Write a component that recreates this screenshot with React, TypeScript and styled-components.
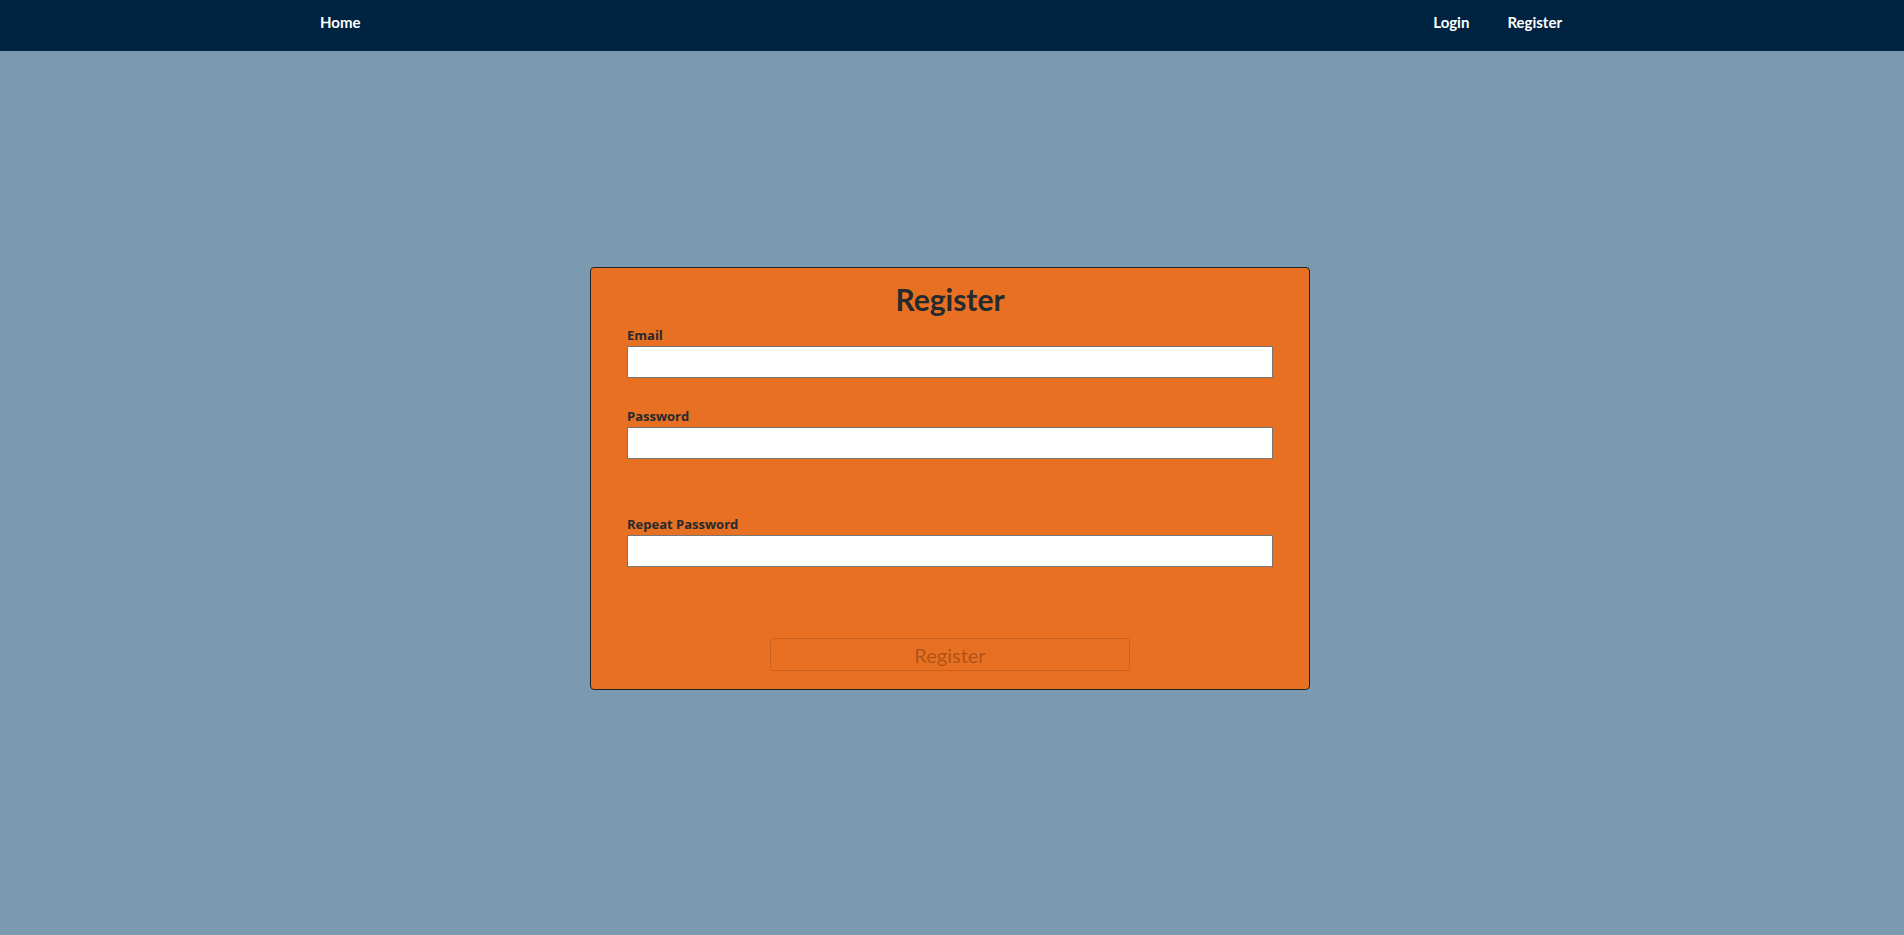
import React from "react";
import styled, { createGlobalStyle } from "styled-components";

const Global = createGlobalStyle`
  html, body { margin: 0; padding: 0; }
  body {
    background: #7b9aaf;
    font-family: "Lato", "Open Sans", sans-serif;
    min-height: 100vh;
  }
`;

const Nav = styled.nav`
  height: 51px;
  background: #002341;
  display: flex;
  align-items: center;
  justify-content: space-between;
  padding: 0 342px 0 320px;
  box-sizing: border-box;
`;

const NavGroup = styled.div`
  display: flex;
  gap: 38px;
  align-items: center;
`;

const NavLink = styled.a`
  color: #ffffff;
  font-weight: 700;
  font-size: 15px;
  text-decoration: none;
  cursor: pointer;
  line-height: 1;
  margin-top: -6px;
`;

const Card = styled.form`
  width: 720px;
  box-sizing: border-box;
  margin: 216px 0 0 calc(50% - 362px);
  background: #e87022;
  border: 1px solid #1f2326;
  border-radius: 4px;
  padding: 14px 36px 18px;
  display: flex;
  flex-direction: column;
`;

const Title = styled.h1`
  margin: 0;
  text-align: center;
  font-size: 30px;
  line-height: 34px;
  font-weight: 700;
  color: #262a2e;
`;

const Field = styled.div<{ $gap: number }>`
  display: flex;
  flex-direction: column;
  margin-top: ${(p) => p.$gap}px;
`;

const Label = styled.label`
  font-family: "Open Sans", "Lato", sans-serif;
  font-size: 13px;
  font-weight: 700;
  color: #262a2e;
  line-height: 16px;
  margin-bottom: 3px;
`;

const Input = styled.input`
  height: 32px;
  box-sizing: border-box;
  border: 1px solid #767676;
  background: #ffffff;
  padding: 0 6px;
  font-size: 14px;
  font-family: inherit;
  outline: none;
`;

const Submit = styled.button`
  align-self: center;
  margin-top: 71px;
  width: 360px;
  height: 33px;
  background: transparent;
  border: 1px solid rgba(150, 70, 20, 0.35);
  border-radius: 3px;
  color: rgba(120, 55, 15, 0.5);
  font-family: inherit;
  font-size: 20px;
  font-weight: 400;
  cursor: default;
`;

export default function App() {
  return (
    <>
      <Global />
      <Nav>
        <NavLink>Home</NavLink>
        <NavGroup>
          <NavLink>Login</NavLink>
          <NavLink>Register</NavLink>
        </NavGroup>
      </Nav>
      <Card onSubmit={(e) => e.preventDefault()}>
        <Title>Register</Title>
        <Field $gap={11}>
          <Label>Email</Label>
          <Input type="email" />
        </Field>
        <Field $gap={30}>
          <Label>Password</Label>
          <Input type="password" />
        </Field>
        <Field $gap={57}>
          <Label>Repeat Password</Label>
          <Input type="password" />
        </Field>
        <Submit type="submit" disabled>
          Register
        </Submit>
      </Card>
    </>
  );
}
